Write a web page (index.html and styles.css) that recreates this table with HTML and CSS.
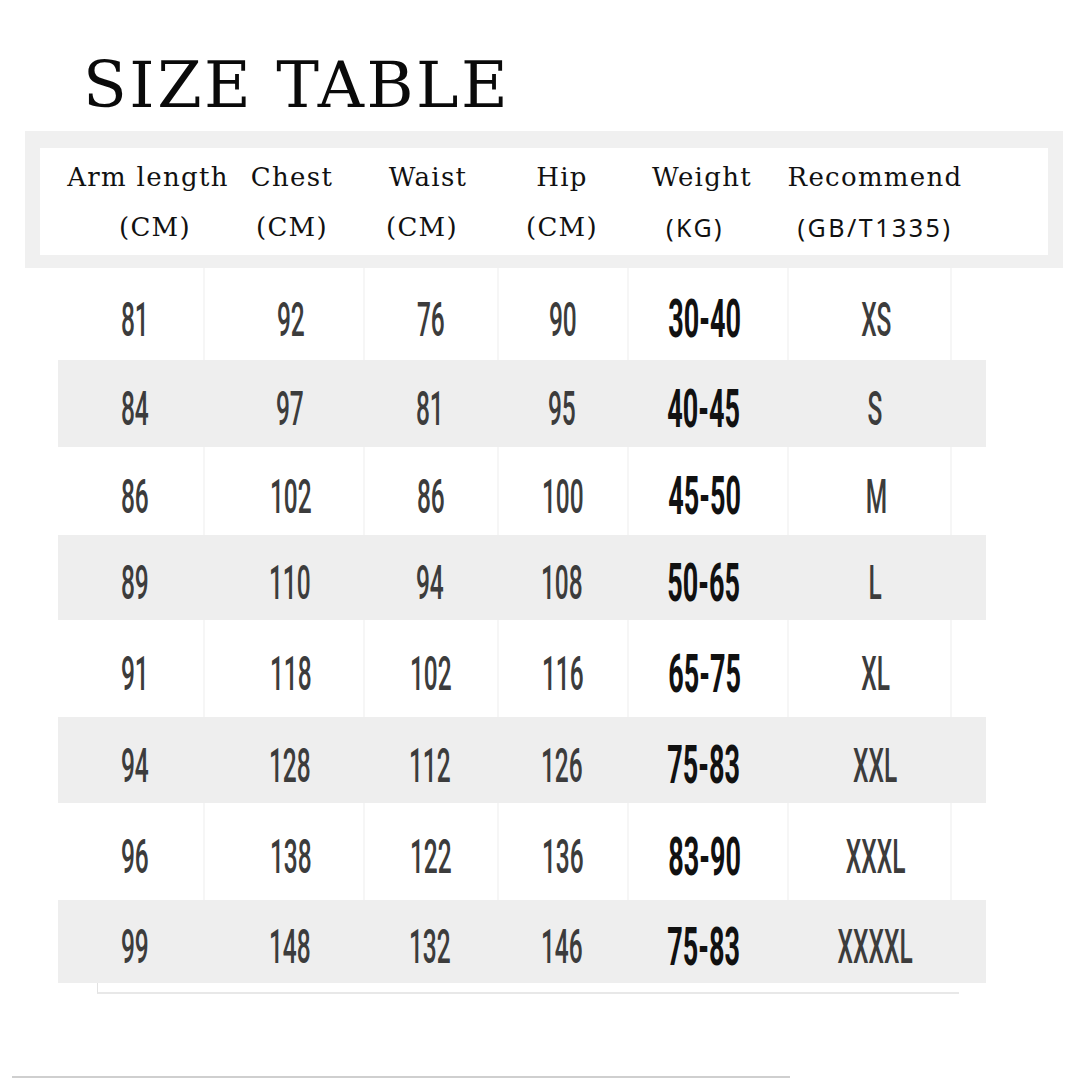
FILE: index.html
```html
<!DOCTYPE html>
<html>
<head>
<meta charset="utf-8">
<link rel="stylesheet" href="styles.css">
</head>
<body>
<div class="page">
  <h1 class="title">SIZE TABLE</h1>
  <div class="head">
    <div class="head-inner">
      <div class="hc"><span class="h1">Arm length</span><span class="h2 sh-r">(CM)</span></div>
      <div class="hc"><span class="h1">Chest</span><span class="h2">(CM)</span></div>
      <div class="hc"><span class="h1">Waist</span><span class="h2 sh-l">(CM)</span></div>
      <div class="hc"><span class="h1">Hip</span><span class="h2">(CM)</span></div>
      <div class="hc"><span class="h1">Weight</span><span class="h2 sans sh-l2">(KG)</span></div>
      <div class="hc"><span class="h1">Recommend</span><span class="h2 sans">(GB/T1335)</span></div>
    </div>
  </div>
  <div class="table">
    <div class="row r1"><div class="c c1"><span class="v">81</span></div><div class="c c2"><span class="v">92</span></div><div class="c c3"><span class="v">76</span></div><div class="c c4"><span class="v">90</span></div><div class="c c5"><span class="v b">30-40</span></div><div class="c c6"><span class="v">XS</span></div><div class="c c7"></div></div>
    <div class="row r2 alt"><div class="c c1"><span class="v">84</span></div><div class="c c2"><span class="v">97</span></div><div class="c c3"><span class="v">81</span></div><div class="c c4"><span class="v">95</span></div><div class="c c5"><span class="v b">40-45</span></div><div class="c c6"><span class="v">S</span></div><div class="c c7"></div></div>
    <div class="row r3"><div class="c c1"><span class="v">86</span></div><div class="c c2"><span class="v">102</span></div><div class="c c3"><span class="v">86</span></div><div class="c c4"><span class="v">100</span></div><div class="c c5"><span class="v b">45-50</span></div><div class="c c6"><span class="v">M</span></div><div class="c c7"></div></div>
    <div class="row r4 alt"><div class="c c1"><span class="v">89</span></div><div class="c c2"><span class="v">110</span></div><div class="c c3"><span class="v">94</span></div><div class="c c4"><span class="v">108</span></div><div class="c c5"><span class="v b">50-65</span></div><div class="c c6"><span class="v">L</span></div><div class="c c7"></div></div>
    <div class="row r5"><div class="c c1"><span class="v">91</span></div><div class="c c2"><span class="v">118</span></div><div class="c c3"><span class="v">102</span></div><div class="c c4"><span class="v">116</span></div><div class="c c5"><span class="v b">65-75</span></div><div class="c c6"><span class="v">XL</span></div><div class="c c7"></div></div>
    <div class="row r6 alt"><div class="c c1"><span class="v">94</span></div><div class="c c2"><span class="v">128</span></div><div class="c c3"><span class="v">112</span></div><div class="c c4"><span class="v">126</span></div><div class="c c5"><span class="v b">75-83</span></div><div class="c c6"><span class="v">XXL</span></div><div class="c c7"></div></div>
    <div class="row r7"><div class="c c1"><span class="v">96</span></div><div class="c c2"><span class="v">138</span></div><div class="c c3"><span class="v">122</span></div><div class="c c4"><span class="v">136</span></div><div class="c c5"><span class="v b">83-90</span></div><div class="c c6"><span class="v">XXXL</span></div><div class="c c7"></div></div>
    <div class="row r8 alt"><div class="c c1"><span class="v">99</span></div><div class="c c2"><span class="v">148</span></div><div class="c c3"><span class="v">132</span></div><div class="c c4"><span class="v">146</span></div><div class="c c5"><span class="v b">75-83</span></div><div class="c c6"><span class="v">XXXXL</span></div><div class="c c7"></div></div>
  </div>
  <div class="under"></div>
  <div class="foot-line"></div>
</div>
</body>
</html>
```

FILE: styles.css
```css
html, body {
  margin: 0;
  padding: 0;
  background: #ffffff;
}
.page {
  width: 1080px;
  height: 1080px;
  overflow: hidden;
  display: flex;
  flex-direction: column;
  align-items: flex-start;
}
.title {
  margin: 50px 0 0 83px;
  font-family: "DejaVu Serif", serif;
  font-weight: 400;
  font-size: 64px;
  line-height: 70px;
  height: 70px;
  letter-spacing: 2.5px;
  color: #0a0a0a;
}
.head {
  margin: 11px 0 0 25px;
  width: 1008px;
  padding: 17px 15px 13px 15px;
  background: #f0f0f0;
}
.head-inner {
  background: #ffffff;
  height: 107px;
  box-sizing: border-box;
  padding: 16px 0 0 36px;
  display: grid;
  grid-template-columns: 144px 144px 128px 140px 140px 206px;
}
.hc {
  display: flex;
  flex-direction: column;
  align-items: center;
  gap: 24px;
}
.h1, .h2 {
  font-family: "DejaVu Serif", serif;
  font-size: 26px;
  line-height: 26px;
  letter-spacing: 1.3px;
  color: #111111;
  white-space: nowrap;
}
.h2.sans {
  font-family: "Noto Sans", sans-serif;
  font-size: 25px;
  letter-spacing: 2.5px;
}
.sh-r { padding-left: 14px; }
.sh-l { padding-right: 12px; }
.sh-l2 { padding-right: 14px; }
.table {
  margin-left: 58px;
  width: 928px;
  display: flex;
  flex-direction: column;
}
.row {
  display: grid;
  grid-template-columns: 145px 160px 134px 130px 160px 163px 36px;
  background: #ffffff;
}
.row.alt { background: #eeeeee; }
.r1 { height: 92px; }
.r2 { height: 87px; }
.r3 { height: 88px; }
.r4 { height: 85px; }
.r5 { height: 97px; }
.r6 { height: 86px; }
.r7 { height: 97px; }
.r8 { height: 83px; }
.c {
  display: flex;
  align-items: center;
  justify-content: center;
  padding-top: 10px;
  box-sizing: border-box;
}
.row:not(.alt) .c + .c { border-left: 2px solid #f6f6f6; }
.c1 { padding-left: 9px; }
.c2 { padding-left: 14px; }
.c5 { padding-right: 6px; }
.c6 { padding-left: 13px; }
.v {
  display: inline-block;
  font-family: Roboto, "Liberation Sans", sans-serif;
  font-weight: 500;
  font-size: 49px;
  line-height: 49px;
  color: #3c3c3c;
  transform: scaleX(0.5);
  white-space: nowrap;
}
.v.b {
  font-weight: 700;
  font-size: 54px;
  line-height: 54px;
  color: #111111;
}
.under {
  margin-left: 97px;
  width: 861px;
  height: 9px;
  border-left: 1px solid #e2e2e2;
  border-bottom: 2px solid #e8e8e8;
}
.foot-line {
  margin: 82px 0 0 12px;
  width: 778px;
  height: 2px;
  background: #cfcfcf;
}
```
